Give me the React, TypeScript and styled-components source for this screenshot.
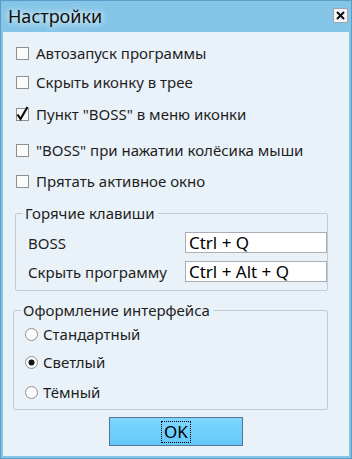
import * as React from 'react';
import styled, { createGlobalStyle } from 'styled-components';

const GlobalStyle = createGlobalStyle`
    html, body {
        margin: 0;
        padding: 0;
        background: #ffffff;
    }
    body {
        font-family: 'Noto Sans', 'Open Sans', sans-serif;
        color: #1e1e1e;
    }
`;

const Window = styled.div`
    width: 352px;
    height: 459px;
    box-sizing: border-box;
    display: flex;
    flex-direction: column;
    background: #84c5e7;
    border: 1px solid #5b9dc8;
    padding: 0 2px 2px 2px;
`;

const TitleBar = styled.div`
    height: 31px;
    display: flex;
    align-items: center;
    justify-content: space-between;
    padding: 0 1px 0 5px;
`;

const TitleText = styled.div`
    font-size: 18px;
    color: #111;
    text-shadow: 0 0 6px rgba(255, 255, 255, 0.9), 0 0 10px rgba(255, 255, 255, 0.7);
    margin-top: -1px;
`;

const CloseButton = styled.div`
    width: 13px;
    height: 13px;
    border: 1px solid #9aa7b2;
    background: #f3f3f3;
    display: flex;
    align-items: center;
    justify-content: center;
    margin-top: -3px;
`;

const Content = styled.div`
    flex: 1;
    background: #eaf2f9;
    display: flex;
    flex-direction: column;
`;

const CheckRow = styled.div<{ $top: number }>`
    height: 22px;
    display: flex;
    align-items: center;
    gap: 7px;
    margin-top: ${p => p.$top}px;
    padding-left: 13px;
    font-size: 15px;
`;

const Group = styled.fieldset<{ $top: number; $left: number; $pb: number }>`
    margin: ${p => p.$top}px 0 0 ${p => p.$left}px;
    width: ${p => 338 - 13 - p.$left}px;
    box-sizing: border-box;
    border: 1px solid #c2ccd6;
    border-radius: 2px;
    padding: 0 0 ${p => p.$pb}px 0;
    min-width: 0;
`;

const Legend = styled.legend`
    margin-left: 7px;
    padding: 0 3px 0 2px;
    font-size: 15px;
    line-height: 20px;
    height: 20px;
`;

const KeyRow = styled.div<{ $top: number }>`
    display: flex;
    align-items: center;
    height: 21px;
    margin-top: ${p => p.$top}px;
    padding-left: 12px;
    font-size: 15px;
`;

const KeyLabel = styled.div`
    width: 158px;
`;

const KeyInput = styled.div`
    width: 143px;
    height: 21px;
    box-sizing: border-box;
    border: 1px solid #abadb3;
    background: #ffffff;
    padding-left: 3px;
    display: flex;
    align-items: center;
    font-size: 17px;
    color: #000;
`;

const RadioRow = styled.div<{ $top: number }>`
    height: 22px;
    display: flex;
    align-items: center;
    gap: 5px;
    margin-top: ${p => p.$top}px;
    padding-left: 11px;
    font-size: 15px;
`;

const Footer = styled.div`
    display: flex;
    justify-content: center;
    margin-top: 7px;
`;

const OkButton = styled.div`
    width: 134px;
    height: 29px;
    box-sizing: border-box;
    border: 1px solid #56758f;
    background: linear-gradient(#7ed7ff, #64c7fb);
    display: flex;
    align-items: center;
    justify-content: center;
`;

const FocusRing = styled.div`
    outline: 1px dotted #000;
    padding: 0 2px;
    height: 20px;
    display: flex;
    align-items: center;
    font-size: 17px;
    color: #000;
`;

const CheckBox = ({ checked }: { checked?: boolean }) => (
    <svg width="13" height="13" viewBox="0 0 13 13" style={{ overflow: 'visible', flexShrink: 0 }}>
        <rect x="0.5" y="0.5" width="12" height="12" fill="#fbfbfb" stroke="#8e8f8f" />
        {checked && <path d="M1.5 6.5 L4.5 11 L11.5 -1" fill="none" stroke="#111" strokeWidth="2.2" />}
    </svg>
);

const Radio = ({ checked }: { checked?: boolean }) => (
    <svg width="13" height="13" viewBox="0 0 13 13" style={{ flexShrink: 0 }}>
        <circle cx="6.5" cy="6.5" r="6" fill="#fbfbfb" stroke="#8e8f8f" />
        {checked && <circle cx="6.5" cy="6.5" r="3" fill="#111" />}
    </svg>
);

const options = [
    { text: 'Автозапуск программы', top: 10 },
    { text: 'Скрыть иконку в трее', top: 7 },
    { text: 'Пункт "BOSS" в меню иконки', top: 10, checked: true },
    { text: '"BOSS" при нажатии колёсика мыши', top: 14 },
    { text: 'Прятать активное окно', top: 9 },
];

const themes = [
    { text: 'Стандартный', top: 3 },
    { text: 'Светлый', top: 6, checked: true },
    { text: 'Тёмный', top: 8 },
];

export default function App() {
    return (
        <>
            <GlobalStyle />
            <Window>
                <TitleBar>
                    <TitleText>Настройки</TitleText>
                    <CloseButton>
                        <svg width="9" height="9" viewBox="0 0 9 9">
                            <path d="M1 1 L8 8 M8 1 L1 8" stroke="#111" strokeWidth="2" />
                        </svg>
                    </CloseButton>
                </TitleBar>
                <Content>
                    {options.map(o => (
                        <CheckRow key={o.text} $top={o.top}>
                            <CheckBox checked={o.checked} />
                            <span>{o.text}</span>
                        </CheckRow>
                    ))}
                    <Group $top={11} $left={12} $pb={8}>
                        <Legend>Горячие клавиши</Legend>
                        <KeyRow $top={9}>
                            <KeyLabel>BOSS</KeyLabel>
                            <KeyInput>Ctrl + Q</KeyInput>
                        </KeyRow>
                        <KeyRow $top={8}>
                            <KeyLabel>Скрыть программу</KeyLabel>
                            <KeyInput>Ctrl + Alt + Q</KeyInput>
                        </KeyRow>
                    </Group>
                    <Group $top={9} $left={10} $pb={6}>
                        <Legend>Оформление интерфейса</Legend>
                        {themes.map(t => (
                            <RadioRow key={t.text} $top={t.top}>
                                <Radio checked={t.checked} />
                                <span>{t.text}</span>
                            </RadioRow>
                        ))}
                    </Group>
                    <Footer>
                        <OkButton>
                            <FocusRing>OK</FocusRing>
                        </OkButton>
                    </Footer>
                </Content>
            </Window>
        </>
    );
}
